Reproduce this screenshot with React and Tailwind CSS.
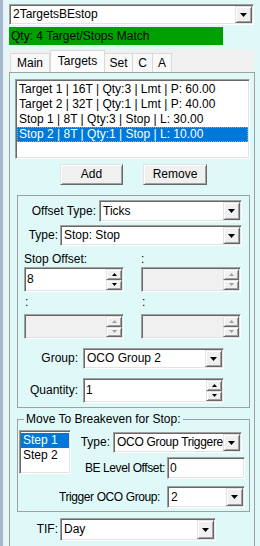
import React from "react";

const raised =
  "bg-[#f0f0f0] border border-t-[#e3e3e3] border-l-[#e3e3e3] border-r-[#696969] border-b-[#696969] shadow-[inset_1px_1px_0_#ffffff,inset_-1px_-1px_0_#a0a0a0]";
const sunken =
  "border border-t-[#a0a0a0] border-l-[#a0a0a0] border-r-white border-b-white shadow-[inset_1px_1px_0_#696969,inset_-1px_-1px_0_#e3e3e3]";

function Tri() {
  return (
    <svg width="7" height="4" viewBox="0 0 7 4">
      <polygon points="0,0 7,0 3.5,4" fill="#000" />
    </svg>
  );
}

function Combo({ className = "", text, textClass = "" }) {
  return (
    <div className={`flex bg-white p-[1px] ${sunken} ${className}`}>
      <div className={`flex-1 overflow-hidden whitespace-nowrap pl-[2px] flex items-center ${textClass}`}>{text}</div>
      <div className={`w-[17px] shrink-0 flex items-center justify-center ${raised}`}>
        <Tri />
      </div>
    </div>
  );
}

function SpinBtn({ up, disabled }) {
  const c = disabled ? "#a0a0a0" : "#000";
  return (
    <div className={`flex-1 flex items-center justify-center ${raised}`}>
      <svg width="5" height="3" viewBox="0 0 5 3">
        {up ? <polygon points="0,3 5,3 2.5,0" fill={c} /> : <polygon points="0,0 5,0 2.5,3" fill={c} />}
      </svg>
    </div>
  );
}

function Spin({ className = "", value = "", disabled }) {
  return (
    <div className={`flex p-[1px] ${sunken} ${disabled ? "bg-[#f0f0f0]" : "bg-white"} ${className}`}>
      <div className="flex-1 pl-[1px] flex items-center">{value}</div>
      <div className="w-[16px] shrink-0 flex flex-col">
        <SpinBtn up disabled={disabled} />
        <SpinBtn disabled={disabled} />
      </div>
    </div>
  );
}

function Btn({ className = "", children }) {
  return <div className={`flex items-center justify-center ${raised} ${className}`}>{children}</div>;
}

const items = [
  "Target 1 | 16T | Qty:3 | Lmt | P: 60.00",
  "Target 2 | 32T | Qty:1 | Lmt | P: 40.00",
  "Stop 1 | 8T | Qty:3 | Stop | L: 30.00",
  "Stop 2 | 8T | Qty:1 | Stop | L: 10.00",
];

export default function App() {
  return (
    <div className="w-[260px] h-[546px] overflow-hidden bg-[#dff8f8] flex font-['Liberation_Sans',Arial,sans-serif] text-[12px] leading-[15px] text-black">
      <div className="w-[3px] shrink-0 bg-[#a6b8cf]" />
      <div className="w-[6px] shrink-0 bg-[#e6f6f6]" />
      <div className="flex flex-col w-[246px] shrink-0">
        <Combo className="mt-[4px] h-[21px] w-[245px]" text="2TargetsBEstop" />
        <div className="mt-[2px] h-[18px] w-[214px] bg-[#00a000] pl-[2px] flex items-center">
          Qty: 4 Target/Stops Match
        </div>
        {/* tab strip */}
        <div className="mt-[4px] h-[23px] bg-[#f0f0f0] flex items-end pl-[1px]">
          <div className="w-[40px] h-[19px] border border-b-0 border-[#d9d9d9] bg-[#f8f8f8] flex items-center justify-center pt-[1px]">
            Main
          </div>
          <div className="w-[55px] h-[23px] -mb-[1px] border border-b-0 border-[#d9d9d9] bg-[#fcfcfc] flex items-start pt-[3px] justify-center">
            Targets
          </div>
          <div className="w-[28px] h-[19px] border border-b-0 border-l-0 border-[#d9d9d9] bg-[#f8f8f8] flex items-center justify-center pt-[1px]">
            Set
          </div>
          <div className="w-[20px] h-[19px] border border-b-0 border-l-0 border-[#d9d9d9] bg-[#f8f8f8] flex items-center justify-center pt-[1px]">
            C
          </div>
          <div className="w-[19px] h-[19px] border border-b-0 border-l-0 border-[#d9d9d9] bg-[#f8f8f8] flex items-center justify-center pt-[1px]">
            A
          </div>
        </div>
        {/* tab page */}
        <div className="flex-1 border border-[#a0a0a0] border-b-0 flex flex-col">
          <div className={`ml-[5px] mt-[6px] h-[80px] w-[235px] bg-white p-[1px] ${sunken}`}>
            <div className="pt-[1px]">
              {items.map((t, i) => (
                <div
                  key={i}
                  className={`h-[15px] pl-[2px] whitespace-nowrap ${
                    i === 3
                      ? "bg-[#0078d7] text-white outline-1 outline-dotted outline-[#f8873a] -outline-offset-1"
                      : ""
                  }`}
                >
                  {t}
                </div>
              ))}
            </div>
          </div>
          <div className="mt-[5px] flex h-[21px]">
            <Btn className="ml-[50px] w-[63px]">Add</Btn>
            <Btn className="ml-[20px] w-[64px]">Remove</Btn>
          </div>
          {/* group box 1 */}
          <div className="mt-[10px] ml-[7px] w-[233px] h-[213px] border border-[#a0a0a0] flex flex-col">
            <div className="mt-[4px] flex h-[22px]">
              <div className="w-[78px] flex items-center justify-end">Offset Type:</div>
              <Combo className="ml-[3px] w-[143px]" text="Ticks" />
            </div>
            <div className="mt-[3px] flex h-[21px]">
              <div className="w-[40px] flex items-center justify-end">Type:</div>
              <Combo className="ml-[2px] w-[182px]" text="Stop: Stop" />
            </div>
            <div className="mt-[6px] flex h-[15px]">
              <div className="ml-[6px] w-[117px]">Stop Offset:</div>
              <div>:</div>
            </div>
            <div className="flex h-[25px]">
              <Spin className="ml-[6px] w-[100px]" value="8" />
              <Spin className="ml-[17px] w-[100px]" disabled />
            </div>
            <div className="mt-[3px] flex h-[15px]">
              <div className="ml-[7px] w-[117px]">:</div>
              <div>:</div>
            </div>
            <div className="mt-[4px] flex h-[25px]">
              <Spin className="ml-[6px] w-[100px]" disabled />
              <Spin className="ml-[17px] w-[100px]" disabled />
            </div>
            <div className="mt-[9px] flex h-[21px]">
              <div className="w-[60px] flex items-center justify-end">Group:</div>
              <Combo className="ml-[5px] w-[141px]" text="OCO Group 2" />
            </div>
            <div className="mt-[9px] flex h-[25px]">
              <div className="w-[60px] flex items-center justify-end">Quantity:</div>
              <Spin className="ml-[5px] w-[141px]" value="1" />
            </div>
          </div>
          {/* group box 2 */}
          <fieldset className="mt-[4px] ml-[7px] w-[233px] border border-[#a0a0a0] pb-[3px] min-w-0">
            <legend className="ml-[6px] px-[2px] leading-[15px]">Move To Breakeven for Stop:</legend>
            <div className="flex">
              <div className={`mt-[3px] ml-[1px] w-[52px] h-[44px] bg-white p-[1px] ${sunken}`}>
                <div className="pt-[1px]">
                  <div className="h-[15px] pl-[2px] bg-[#0078d7] text-white">Step 1</div>
                  <div className="h-[15px] pl-[2px]">Step 2</div>
                </div>
              </div>
              <div className="flex flex-col">
                <div className="mt-[5px] flex h-[21px]">
                  <div className="w-[39px] flex items-center justify-end">Type:</div>
                  <Combo className="ml-[3px] w-[129px]" textClass="tracking-[-0.3px]" text="OCO Group Triggered" />
                </div>
                <div className="mt-[4px] flex h-[22px]">
                  <div className="w-[94px] flex items-center justify-end whitespace-nowrap tracking-[-0.4px]">
                    BE Level Offset:
                  </div>
                  <div className={`ml-[2px] w-[78px] bg-white p-[1px] pl-[2px] flex items-center ${sunken}`}>0</div>
                </div>
              </div>
            </div>
            <div className="mt-[7px] flex h-[22px]">
              <div className="w-[142px] flex items-center justify-end tracking-[-0.4px]">Trigger OCO Group:</div>
              <Combo className="ml-[7px] w-[78px]" text="2" />
            </div>
          </fieldset>
          <div className="mt-[6px] flex h-[23px]">
            <div className="w-[48px] flex items-center justify-end">TIF:</div>
            <Combo className="ml-[2px] w-[156px]" text="Day" />
          </div>
        </div>
      </div>
    </div>
  );
}
